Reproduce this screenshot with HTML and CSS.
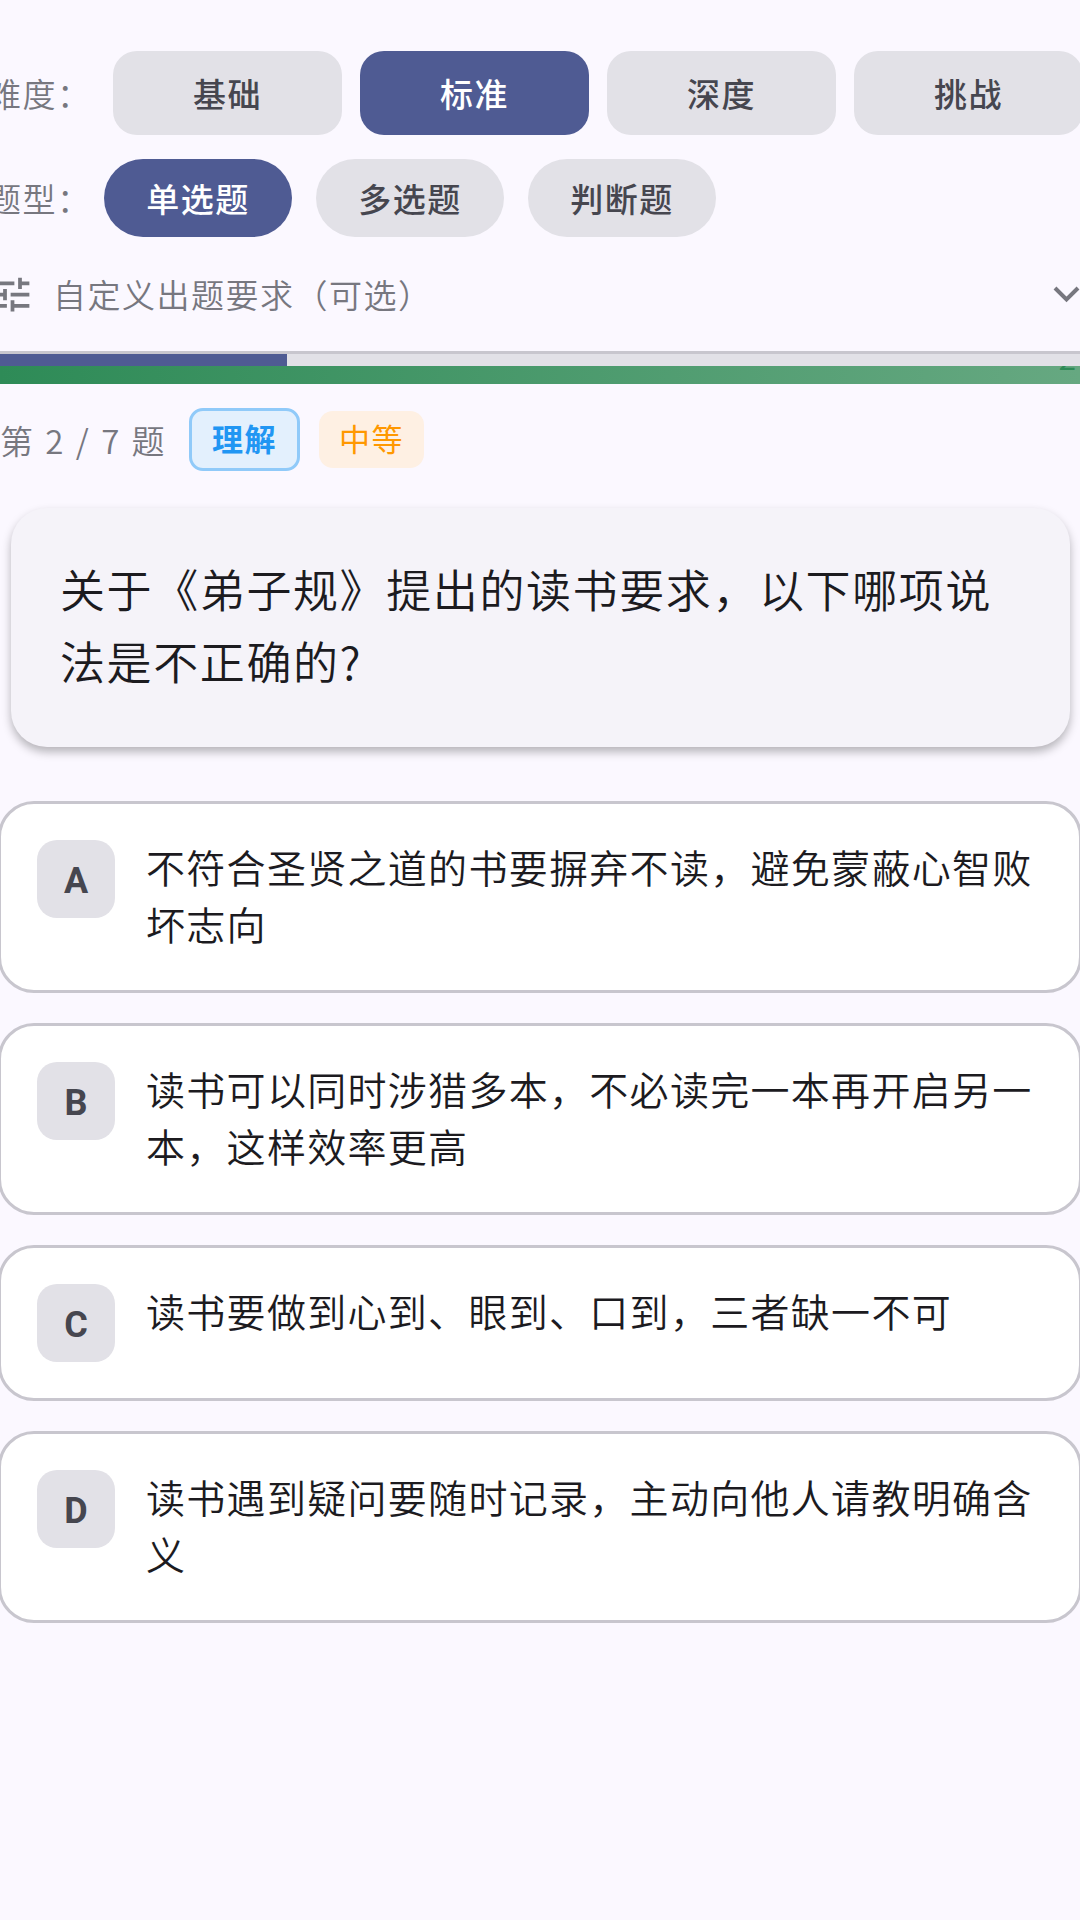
FILE: index.html
```html
<!DOCTYPE html>
<html lang="zh-CN">
<head>
  <meta charset="UTF-8">
  <meta name="viewport" content="width=device-width, initial-scale=1.0">
  <title>出题</title>
  <link rel="stylesheet" href="styles.css">
</head>
<body>
  <div class="filters">
    <div class="level-row">
      <span class="row-label level-label">难度&#65306;</span>
      <button class="level-btn">基础</button>
      <button class="level-btn active">标准</button>
      <button class="level-btn">深度</button>
      <button class="level-btn">挑战</button>
    </div>
    <div class="type-row">
      <span class="row-label type-label">题型&#65306;</span>
      <button class="type-btn active">单选题</button>
      <button class="type-btn">多选题</button>
      <button class="type-btn">判断题</button>
    </div>
    <div class="custom-row">
      <svg class="tune-icon" viewBox="0 0 24 24"><path d="M3 17v2h6v-2H3zM3 5v2h10V5H3zm10 16v-2h8v-2h-8v-2h-2v6h2zM7 9v2H3v2h4v2h2V9H7zm14 4v-2H11v2h10zm-6-4h2V7h4V5h-4V3h-2v6z"/></svg>
      <span class="custom-text">自定义出题要求&#65288;可选&#65289;</span>
      <svg class="chevron" viewBox="0 0 27 17"><path d="M2 2l11.5 11.5L25 2"/></svg>
    </div>
  </div>

  <div class="progress"><div class="progress-fill"></div></div>
  <div class="green-bar"><span class="green-text">2∨</span></div>

  <div class="meta-row">
    <span class="meta-count">第 2 / 7 题</span>
    <span class="tag tag-blue">理解</span>
    <span class="tag tag-orange">中等</span>
  </div>

  <div class="question">关于《弟子规》提出的读书要求&#65292;以下哪项说法是不正确的?</div>

  <div class="options">
    <div class="option">
      <div class="letter">A</div>
      <div class="option-text">不符合圣贤之道的书要摒弃不读&#65292;避免蒙蔽心智败坏志向</div>
    </div>
    <div class="option">
      <div class="letter">B</div>
      <div class="option-text">读书可以同时涉猎多本&#65292;不必读完一本再开启另一本&#65292;这样效率更高</div>
    </div>
    <div class="option">
      <div class="letter">C</div>
      <div class="option-text">读书要做到心到、眼到、口到&#65292;三者缺一不可</div>
    </div>
    <div class="option">
      <div class="letter">D</div>
      <div class="option-text">读书遇到疑问要随时记录&#65292;主动向他人请教明确含义</div>
    </div>
  </div>
</body>
</html>
```

FILE: styles.css
```css
html, body {
  margin: 0;
  width: 1080px;
  height: 1920px;
  overflow: hidden;
}
body {
  background-color: #fbf8ff;
  font-family: "Noto Sans CJK SC", "Noto Sans", sans-serif;
  font-weight: 350;
  color: #1c1b1f;
}
button {
  border: none;
  padding: 0;
  font-family: inherit;
  font-weight: 500;
  font-size: 33px;
  letter-spacing: 1.5px;
  background-color: #e2e1e7;
  color: #46464f;
}
button.active {
  background-color: #4f5b93;
  color: #fff;
}

.filters {
  padding-top: 51px;
}
.row-label {
  font-size: 33px;
  letter-spacing: 1.5px;
  line-height: 33px;
  color: #77777f;
  white-space: nowrap;
}
.level-row {
  display: flex;
  align-items: center;
  gap: 18px;
  height: 84px;
}
.level-label {
  margin-left: -12px;
  width: 107px;
  flex: none;
}
.level-btn {
  width: 229px;
  height: 84px;
  flex: none;
  border-radius: 24px;
}
.type-row {
  display: flex;
  align-items: center;
  gap: 24px;
  height: 78px;
  margin-top: 24px;
}
.type-label {
  margin-left: -12px;
  width: 92px;
  flex: none;
}
.type-btn {
  width: 188px;
  height: 78px;
  flex: none;
  border-radius: 39px;
}
.custom-row {
  display: flex;
  align-items: center;
  height: 114px;
}
.tune-icon {
  width: 45px;
  height: 45px;
  margin-left: -10px;
  fill: #77777f;
  flex: none;
}
.custom-text {
  font-size: 33px;
  letter-spacing: 1.5px;
  color: #77777f;
  margin-left: 18px;
  flex: 1;
}
.chevron {
  width: 27px;
  height: 17px;
  fill: none;
  stroke: #77777f;
  stroke-width: 4;
  flex: none;
}

.progress {
  height: 12px;
  border-top: 3px solid #c8c6ce;
  background-color: #e2e1e7;
}
.progress-fill {
  width: 287px;
  height: 100%;
  background-color: #4f5b93;
}
.green-bar {
  position: relative;
  height: 18px;
  overflow: hidden;
  background: linear-gradient(90deg, #2e8b57, #66a881);
}
.green-text {
  position: absolute;
  right: -28px;
  top: -26px;
  font-size: 32px;
  line-height: 32px;
  color: #2e8b57;
}

.meta-row {
  display: flex;
  align-items: center;
  margin-top: 24px;
  height: 63px;
}
.meta-count {
  font-size: 33px;
  letter-spacing: 2.5px;
  color: #77777f;
  width: 189px;
  flex: none;
  white-space: nowrap;
}
.tag {
  box-sizing: border-box;
  display: flex;
  align-items: center;
  justify-content: center;
  font-size: 31px;
  letter-spacing: 1.5px;
  padding-bottom: 4px;
  border-radius: 14px;
}
.tag-blue {
  width: 111px;
  height: 63px;
  background-color: #e3f0fd;
  border: 3px solid #90caf9;
  color: #2196f3;
  font-weight: 700;
}
.tag-orange {
  width: 105px;
  height: 57px;
  margin-left: 19px;
  background-color: #fef0e3;
  color: #ff9800;
  font-weight: 400;
}

.question {
  box-sizing: border-box;
  margin: 37px 10px 0 11px;
  padding: 45px 49px;
  min-height: 239px;
  background-color: #f5f3f9;
  border-radius: 36px;
  font-size: 45px;
  letter-spacing: 1.6px;
  line-height: 72px;
  box-shadow: 0 5px 10px rgba(0, 0, 0, 0.28);
}

.options {
  margin: 54px -2px 0;
  display: flex;
  flex-direction: column;
  gap: 30px;
}
.option {
  box-sizing: border-box;
  display: flex;
  gap: 31px;
  padding: 36px;
  background-color: #fff;
  border: 3px solid #c8c6ce;
  border-radius: 36px;
}
.letter {
  box-sizing: border-box;
  width: 78px;
  height: 78px;
  flex: none;
  padding-top: 3px;
  border-radius: 20px;
  background-color: #e2e1e7;
  color: #46464f;
  font-family: "Roboto", sans-serif;
  font-weight: 700;
  font-size: 36px;
  display: flex;
  align-items: center;
  justify-content: center;
}
.option-text {
  font-size: 39px;
  letter-spacing: 1.3px;
  line-height: 57px;
  margin: -2px 0 2px;
}
```
